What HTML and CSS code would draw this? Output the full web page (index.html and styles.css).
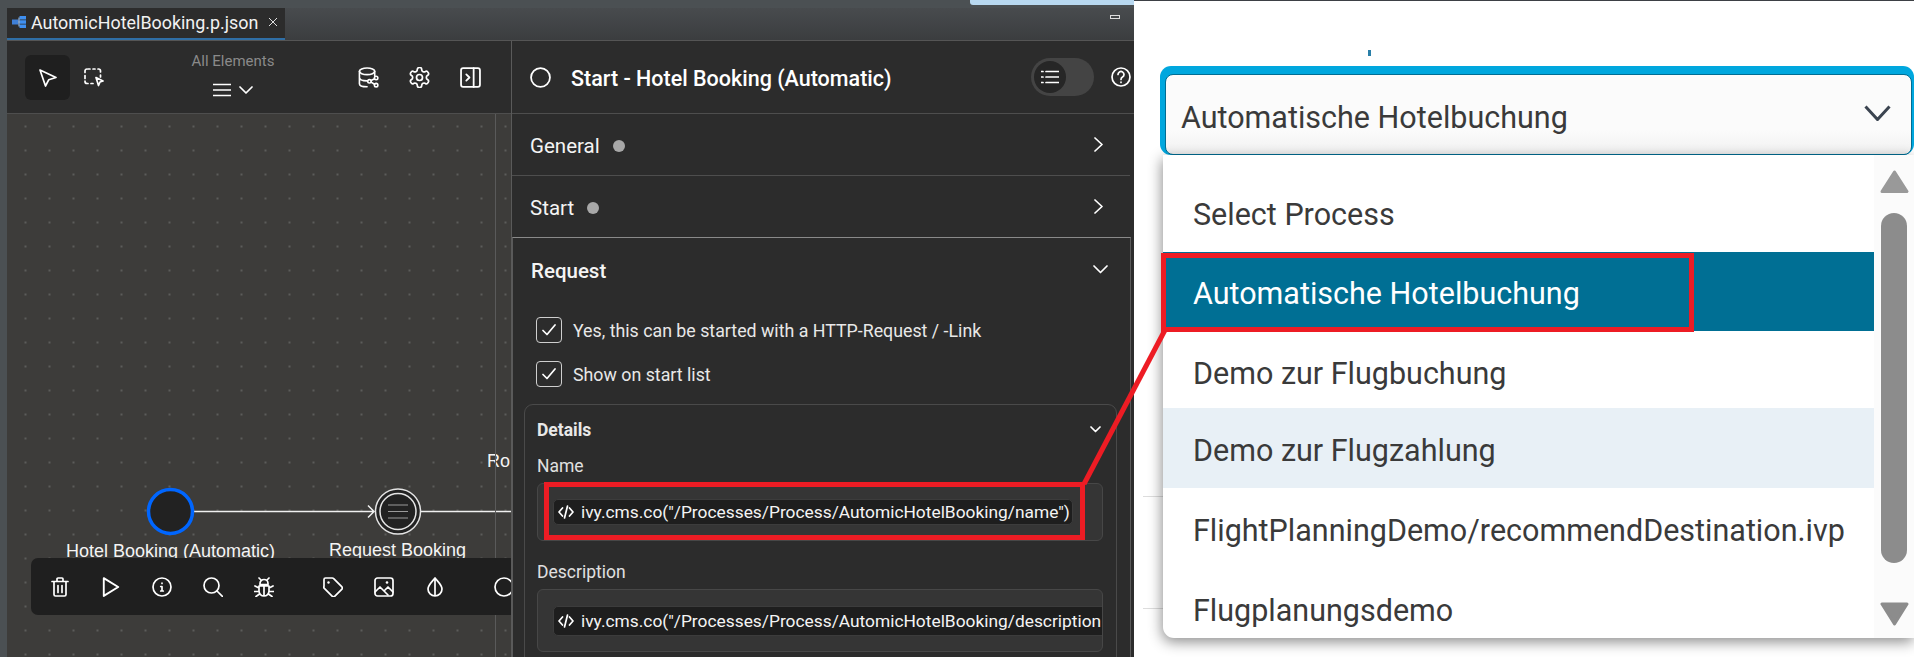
FILE: index.html
```html
<!DOCTYPE html>
<html lang="en">
<head>
  <meta charset="UTF-8">
  <title>Automatic Hotel Booking</title>
  <link rel="stylesheet" href="styles.css">
</head>
<body>
  <div class="page">
    <div class="ide">
      <div class="top-strip"><div class="top-progress"></div></div>
      <div class="tabbar">
        <div class="tab">
          <svg class="tab-icon" viewBox="0 0 14 12"><path d="M0 3.500h6.500v5H0z" fill="#3f7fd6"/><path d="M7.500 0H14v3.500H7.500zM7.500 4.300H14v3.400H7.500zM7.500 8.500H14V12H7.500z" fill="#3f8ff0"/><path d="M6.500 6h1M7 1.500v9" stroke="#a9c8ee" fill="none"/></svg>
          <span class="tab-name">AutomicHotelBooking.p.json</span>
          <svg class="tab-close" viewBox="0 0 10 10"><path d="M1 1l8 8M9 1l-8 8"/></svg>
        </div>
        <div class="tab-min"></div>
      </div>

      <div class="ide-body">
        <!-- process editor -->
        <div class="editor">
          <div class="toolbar">
            <div class="tool-group">
              <div class="tool tool-active">
                <svg class="icon" viewBox="0 0 18 18"><path d="M1 1l16 7.500-7.200 2.200L6.500 17z"/></svg>
              </div>
              <div class="tool">
                <svg class="icon icon-marquee" viewBox="0 0 20 19"><path d="M4 1h2M9 1h2M14 1h.5a2 2 0 0 1 2 2v1M1 4.500V3a2 2 0 0 1 2-2M1 7.500v3M1 13v.5a2 2 0 0 0 2 2h1M7 15.500h2M16.500 7v2"/><path d="M12 9.500l7 3.500-3 1-1.500 3.500z"/></svg>
              </div>
            </div>
            <div class="filter">
              <div class="filter-label">All Elements</div>
              <div class="filter-menu">
                <svg class="icon icon-burger" viewBox="0 0 18 14"><path d="M0 1.500h18M0 7h18M0 12.500h18"/></svg>
                <svg class="icon icon-chev" viewBox="0 0 14 8"><path d="M1 1l6 6 6-6"/></svg>
              </div>
            </div>
            <div class="tool-group tool-group-right">
              <svg class="icon icon-big" viewBox="0 0 22 22"><ellipse cx="9.500" cy="4.500" rx="8" ry="3.500"/><path d="M1.500 4.500v13c0 2 3.500 3.200 8 3.200M1.500 11c0 2 3.500 3.500 8 3.500M17.500 4.500v5"/><circle cx="12" cy="15" r="1.800"/><circle cx="19" cy="11.500" r="1.800"/><circle cx="19" cy="19" r="1.800"/><path d="M13.700 14.200l3.600-1.800M13.700 15.900l3.600 2.200"/></svg>
              <svg class="icon icon-big icon-gear" viewBox="2 1.500 20 21"><path d="M12.220 2h-.44a2 2 0 0 0-2 2v.18a2 2 0 0 1-1 1.730l-.43.250a2 2 0 0 1-2 0l-.15-.08a2 2 0 0 0-2.730.730l-.22.380a2 2 0 0 0 .730 2.730l.15.100a2 2 0 0 1 1 1.720v.510a2 2 0 0 1-1 1.740l-.15.090a2 2 0 0 0-.730 2.730l.22.380a2 2 0 0 0 2.730.730l.15-.08a2 2 0 0 1 2 0l.43.250a2 2 0 0 1 1 1.730V20a2 2 0 0 0 2 2h.44a2 2 0 0 0 2-2v-.18a2 2 0 0 1 1-1.730l.43-.25a2 2 0 0 1 2 0l.15.080a2 2 0 0 0 2.730-.730l.22-.390a2 2 0 0 0-.730-2.730l-.15-.08a2 2 0 0 1-1-1.740v-.5a2 2 0 0 1 1-1.740l.15-.09a2 2 0 0 0 .730-2.730l-.22-.38a2 2 0 0 0-2.730-.730l-.15.080a2 2 0 0 1-2 0l-.43-.25a2 2 0 0 1-1-1.730V4a2 2 0 0 0-2-2z"/><circle cx="12" cy="12" r="3"/></svg>
              <svg class="icon icon-big" viewBox="0 0 20 20"><rect x="1" y="1" width="18" height="18" rx="2"/><path d="M13 1v18M6 7l3 3-3 3"/></svg>
            </div>
          </div>

          <div class="canvas">
            <svg class="flow" viewBox="0 0 504 544">
              <path class="flow-line" d="M186 397.500h180M361 391.500l6 6-6 6M413 397.500h91"/>
              <circle class="node-start" cx="163.500" cy="397.500" r="22"/>
              <circle class="node-outer" cx="391" cy="397.500" r="22.500"/>
              <circle class="node-inner" cx="391" cy="397.500" r="18"/>
              <path class="node-lines" d="M381 391h20M381 397.500h20M381 404h20"/>
            </svg>
            <span class="node-label label-start">Hotel Booking (Automatic)</span>
            <span class="node-label label-request">Request Booking</span>
            <span class="node-label label-route">Ro</span>

            <div class="quick-bar">
              <svg class="icon qb" viewBox="0 0 18 20"><path d="M1 4.500h16M3 4.500v13a1.500 1.500 0 0 0 1.500 1.500h9a1.500 1.500 0 0 0 1.500-1.500v-13M6 4.500V2a1 1 0 0 1 1-1h4a1 1 0 0 1 1 1v2.500M7 8.500v7M11 8.500v7"/></svg>
              <svg class="icon qb" viewBox="0 0 16 18"><path d="M1.500 1l13 8-13 8z"/></svg>
              <svg class="icon qb" viewBox="0 0 20 20"><circle cx="10" cy="10" r="9"/><path d="M10 9.500v4.500M10 6v.5M8.700 9.500H10M8.700 14h2.600"/></svg>
              <svg class="icon qb" viewBox="0 0 20 20"><circle cx="8.500" cy="8.500" r="7.500"/><path d="M14 14l5.500 5.500"/></svg>
              <svg class="icon qb qb-gap" viewBox="0 0 20 20"><path d="M6 6.500a4 4 0 0 1 8 0v1H6zM5 9h10v5a5 5 0 0 1-10 0zM10 9v10M5 11L1 9M15 11l4-2M5 14.500H0.500M15 14.500h4.500M5.500 17L2 19.500M14.500 17l3.500 2.500M7 3L5 1M13 3l2-2"/></svg>
              <svg class="icon qb" viewBox="0 0 20 20"><path d="M1 2.500A1.500 1.500 0 0 1 2.500 1h6.800a2 2 0 0 1 1.400.6l8 8a2 2 0 0 1 0 2.800l-6.800 6.800a2 2 0 0 1-2.800 0l-8-8A2 2 0 0 1 1 9.300z"/><circle class="icon-fill" cx="5.500" cy="5.500" r="1.200"/></svg>
              <svg class="icon qb" viewBox="0 0 20 20"><rect x="1" y="1" width="18" height="18" rx="2.500"/><path d="M1 15l5-5 8 8M11 13l3-3 5 5"/><circle class="icon-fill" cx="13" cy="5.500" r="1.300"/></svg>
              <svg class="icon qb" viewBox="0 0 16 20"><path d="M8 1c3 4 7 7 7 11a7 7 0 0 1-14 0c0-4 4-7 7-11zM8 1v18"/></svg>
              <svg class="icon qb qb-last" viewBox="0 0 20 20"><circle cx="10" cy="10" r="9"/></svg>
            </div>
          </div>
        </div>

        <!-- inscription panel -->
        <div class="panel">
          <div class="panel-head">
            <svg class="icon head-circle" viewBox="0 0 20 20"><circle cx="10" cy="10" r="9"/></svg>
            <span class="panel-title">Start - Hotel Booking (Automatic)</span>
            <div class="toggle">
              <div class="toggle-knob">
                <svg class="icon icon-list" viewBox="0 0 18 14"><path d="M5 1.500h13M5 7h13M5 12.500h13M0 1.500h2M0 7h2M0 12.500h2"/></svg>
              </div>
            </div>
            <svg class="icon icon-help" viewBox="0 0 20 20"><circle cx="10" cy="10" r="9"/><path d="M7 7.500a3 3 0 1 1 4.500 2.600c-1 .6-1.500 1.200-1.500 2.400M10 15v.5"/></svg>
          </div>

          <div class="acc-row">
            <span class="acc-name">General</span><span class="acc-dot"></span>
            <svg class="icon acc-chev" viewBox="0 0 9 15"><path d="M1 1l7 6.500-7 6.500"/></svg>
          </div>
          <div class="acc-row acc-row-last">
            <span class="acc-name">Start</span><span class="acc-dot"></span>
            <svg class="icon acc-chev" viewBox="0 0 9 15"><path d="M1 1l7 6.500-7 6.500"/></svg>
          </div>

          <div class="request">
            <div class="request-head">
              <span class="acc-name acc-name-strong">Request</span>
              <svg class="icon chev-down" viewBox="0 0 15 9"><path d="M1 1l6.500 6.500L14 1"/></svg>
            </div>
            <label class="check-row">
              <span class="check"><svg class="icon" viewBox="0 0 14 12"><path d="M1 6.500l4 4L13 1"/></svg></span>
              Yes, this can be started with a HTTP-Request / -Link
            </label>
            <label class="check-row">
              <span class="check"><svg class="icon" viewBox="0 0 14 12"><path d="M1 6.500l4 4L13 1"/></svg></span>
              Show on start list
            </label>

            <div class="details">
              <div class="details-head">
                <span class="details-title">Details</span>
                <svg class="icon chev-small" viewBox="0 0 11 7"><path d="M1 1l4.500 4.500L10 1"/></svg>
              </div>
              <div class="field-label">Name</div>
              <div class="field">
                <div class="script-input">
                  <svg class="icon icon-code" viewBox="0 0 16 14"><path d="M4.500 3L1 7l3.500 4M11.500 3L15 7l-3.500 4M9.500 1L6.500 13"/></svg>
                  <span class="script-text">ivy.cms.co("/Processes/Process/AutomicHotelBooking/name")</span>
                </div>
              </div>
              <div class="field-label field-label-second">Description</div>
              <div class="field field-tall">
                <div class="script-input script-input-tall">
                  <svg class="icon icon-code" viewBox="0 0 16 14"><path d="M4.500 3L1 7l3.500 4M11.500 3L15 7l-3.500 4M9.500 1L6.500 13"/></svg>
                  <span class="script-text">ivy.cms.co("/Processes/Process/AutomicHotelBooking/description</span>
                </div>
              </div>
            </div>
          </div>
        </div>
      </div>
    </div>

    <!-- translated process start dropdown -->
    <div class="web">
      <div class="tick"></div>
      <div class="select-ring">
        <div class="select">
          <span class="select-value">Automatische Hotelbuchung</span>
          <svg class="select-chev" viewBox="0 0 27 16"><path d="M1.500 1.500l12 13 12-13"/></svg>
        </div>
      </div>
      <div class="bg-line bg-line-one"></div>
      <div class="bg-line bg-line-two"></div>
      <div class="menu">
        <ul class="options">
          <li>Select Process</li>
          <li class="selected">Automatische Hotelbuchung</li>
          <li class="short">Demo zur Flugbuchung</li>
          <li class="hovered">Demo zur Flugzahlung</li>
          <li>FlightPlanningDemo/recommendDestination.ivp</li>
          <li>Flugplanungsdemo</li>
        </ul>
        <div class="scrollbar">
          <svg class="arrow" viewBox="0 0 29 23"><path d="M14.500 2L27 21.500H2z"/></svg>
          <div class="thumb"></div>
          <svg class="arrow arrow-down" viewBox="0 0 29 24"><path d="M2 2h25L14.500 22z"/></svg>
        </div>
      </div>
    </div>

    <!-- red annotation drawn over the screenshot -->
    <svg class="callout" viewBox="0 0 1914 657">
      <rect x="546.500" y="484.500" width="536" height="53"/>
      <rect x="1163.500" y="255.500" width="528" height="74"/>
      <path d="M1084 484L1165 330"/>
    </svg>
  </div>
</body>
</html>
```

FILE: styles.css
```css
* {
  box-sizing: border-box;
}

html, body {
  margin: 0;
  padding: 0;
  height: 100%;
  overflow: hidden;
}

body {
  font-family: Roboto, "Open Sans", Arial, sans-serif;
  background-color: #ffffff;
}

.page {
  position: relative;
  display: flex;
  width: 1914px;
  height: 657px;
}

.icon {
  display: block;
  fill: none;
  stroke: #ffffff;
  stroke-width: 1.7;
  stroke-linecap: round;
  stroke-linejoin: round;
}

.icon-fill {
  fill: #ffffff;
  stroke: none;
}

/* IDE side */
.ide {
  display: flex;
  flex-direction: column;
  width: 1134px;
  flex: none;
  padding-left: 7px;
  background-color: #4b5053;
  overflow: hidden;
}

.top-strip {
  display: flex;
  justify-content: flex-end;
  height: 8px;
  flex: none;
}

.top-progress {
  width: 164px;
  height: 5px;
  background-color: #b8d8f0;
  border-radius: 0 0 0 3px;
}

.tabbar {
  display: flex;
  justify-content: space-between;
  align-items: flex-start;
  height: 33px;
  flex: none;
  background: linear-gradient(#484b4e, #3b3d3f);
  border-bottom: 1px solid #555555;
}

.tab {
  display: flex;
  align-items: center;
  width: 278px;
  height: 32px;
  padding: 0 0 2px 5px;
  background-color: #2c2c2c;
  border-bottom: 2px solid #2f6ea5;
}

.tab-icon {
  width: 14px;
  height: 12px;
  margin-right: 5px;
}

.tab-name {
  font-size: 17.9px;
  color: #f2f2f2;
  white-space: nowrap;
}

.tab-close {
  width: 10px;
  height: 10px;
  margin-left: 10px;
  fill: none;
  stroke: #e0e0e0;
  stroke-width: 1;
}

.tab-min {
  width: 10px;
  height: 4px;
  margin: 7px 14px 0 0;
  border: 1px solid #dddddd;
}

.ide-body {
  display: flex;
  flex: 1;
  min-height: 0;
}

.editor {
  display: flex;
  flex-direction: column;
  width: 504px;
  flex: none;
}

.toolbar {
  position: relative;
  display: flex;
  height: 73px;
  flex: none;
  padding: 14px 29px 0 18px;
  background-color: #2c2c2c;
  border-bottom: 1px solid #4e4e4e;
}

.tool-group {
  display: flex;
  gap: 1px;
}

.tool {
  display: flex;
  justify-content: center;
  align-items: center;
  width: 45px;
  height: 45px;
}

.tool .icon {
  width: 18px;
  height: 18px;
}

.tool .icon-marquee {
  width: 20px;
  height: 19px;
}

.tool-active {
  background-color: #1f1f1f;
  border-radius: 6px;
}

.filter {
  width: 100px;
  margin: -3px 0 0 67px;
  text-align: center;
}

.filter-label {
  font-size: 15px;
  line-height: 18px;
  color: #8a8a8a;
}

.filter-menu {
  display: flex;
  justify-content: center;
  align-items: center;
  gap: 8px;
  margin-top: 13px;
}

.icon-burger {
  width: 18px;
  height: 14px;
}

.icon-chev {
  width: 14px;
  height: 8px;
}

.tool-group-right {
  gap: 30px;
  margin-left: auto;
  align-items: flex-start;
  padding: 12px 1px 0 0;
}

.icon-big {
  width: 21px;
  height: 21px;
}

/* diagram area, free canvas */
.canvas {
  position: relative;
  flex: 1;
  background-color: #3d3c3a;
  background-image: radial-gradient(circle, #5c5c5a 1px, transparent 1.2px);
  background-size: 24px 24px;
  background-position: 6.500px 0.500px;
  overflow: hidden;
}

.canvas::after {
  content: "";
  position: absolute;
  top: 0;
  bottom: 0;
  left: 488px;
  width: 1px;
  background-color: #5a5a5a;
}

.flow {
  position: absolute;
  left: 0;
  top: 0;
  width: 504px;
  height: 544px;
}

.flow-line {
  fill: none;
  stroke: #f0f0f0;
  stroke-width: 1.5;
}

.node-start {
  fill: #222222;
  stroke: #0066ff;
  stroke-width: 3.5;
}

.node-outer {
  fill: #222222;
  stroke: #e4e4e4;
  stroke-width: 1.5;
}

.node-inner {
  fill: #222222;
  stroke: #e4e4e4;
  stroke-width: 1.5;
}

.node-lines {
  stroke: #9a9a9a;
  stroke-width: 1.2;
}

.node-label {
  position: absolute;
  font-family: "Liberation Sans", Arial, sans-serif;
  font-size: 18px;
  line-height: 20px;
  color: #f4f4f4;
  white-space: nowrap;
}

.label-start {
  left: 59px;
  top: 427px;
}

.label-request {
  left: 322px;
  top: 426px;
}

.label-route {
  left: 480px;
  top: 337px;
}

.quick-bar {
  position: absolute;
  left: 24px;
  top: 444px;
  display: flex;
  align-items: center;
  gap: 31px;
  width: 490px;
  height: 57px;
  padding-left: 19px;
  background-color: #1f1f1f;
  border-radius: 7px;
  z-index: 1;
  overflow: hidden;
}

.qb {
  width: 20px;
  height: 20px;
  flex: none;
}

.qb-gap {
  margin-right: 18px;
}

.qb-last {
  margin-left: 18px;
}

/* inscription panel */
.panel {
  flex: 1;
  min-width: 0;
  background-color: #2c2c2c;
  border-left: 1px solid #5a5a5a;
}

.panel-head {
  display: flex;
  align-items: center;
  height: 73px;
  padding: 0 3px 0 18px;
  border-bottom: 1px solid #4e4e4e;
}

.head-circle {
  width: 21px;
  height: 21px;
  margin-right: 20px;
}

.panel-title {
  padding-top: 2px;
  font-size: 21.5px;
  font-weight: 500;
  color: #ffffff;
  white-space: nowrap;
}

.toggle {
  width: 63px;
  height: 38px;
  margin-left: auto;
  padding: 3px;
  background-color: #444444;
  border-radius: 19px;
}

.toggle-knob {
  display: flex;
  justify-content: center;
  align-items: center;
  width: 32px;
  height: 32px;
  background-color: #262626;
  border-radius: 50%;
}

.icon-list {
  width: 18px;
  height: 14px;
}

.icon-help {
  width: 20px;
  height: 20px;
  margin-left: 17px;
}

.acc-row {
  display: flex;
  align-items: center;
  height: 62px;
  width: 618px;
  padding: 3px 27px 0 18px;
  border-bottom: 1px solid #4e4e4e;
}

.acc-row-last {
  height: 61px;
  border-bottom: 0;
}

.acc-name {
  font-size: 20.5px;
  color: #f4f4f4;
}

.acc-name-strong {
  font-weight: 500;
}

.acc-dot {
  width: 12px;
  height: 12px;
  margin-left: 13px;
  background-color: #a8a8a8;
  border-radius: 50%;
}

.acc-chev {
  width: 9px;
  height: 15px;
  margin: -3px 0 0 auto;
}

.request {
  width: 619px;
  height: 420px;
  border: 1px solid #8a8a8a;
  border-bottom: 0;
  border-left-color: #5a5a5a;
  border-right-color: #5a5a5a;
}

.request-head {
  display: flex;
  align-items: center;
  justify-content: space-between;
  height: 64px;
  padding: 2px 22px 0 18px;
}

.chev-down {
  width: 15px;
  height: 9px;
  margin-top: -3px;
}

.check-row {
  display: flex;
  align-items: center;
  height: 26px;
  margin: 15px 0 18px 23px;
  font-size: 17.8px;
  color: #e8e8e8;
}

.check-row + .check-row {
  margin-top: 0;
}

.check {
  display: flex;
  justify-content: center;
  align-items: center;
  width: 26px;
  height: 26px;
  margin-right: 11px;
  border: 1px solid #cfcfcf;
  border-radius: 4px;
}

.check .icon {
  width: 14px;
  height: 12px;
}

.details {
  width: 593px;
  height: 300px;
  margin: -1px 0 0 11px;
  padding: 0 12px;
  border: 1px solid #4a4a4a;
  border-radius: 9px;
}

.details-head {
  display: flex;
  justify-content: space-between;
  align-items: center;
  height: 49px;
  padding-right: 3px;
}

.details-title {
  font-size: 17.5px;
  font-weight: 700;
  color: #e8e8e8;
}

.chev-small {
  width: 11px;
  height: 7px;
}

.field-label {
  font-size: 17.5px;
  line-height: 24px;
  color: #e0e0e0;
}

.field-label-second {
  margin-top: 19px;
}

.field {
  display: flex;
  align-items: center;
  width: 566px;
  height: 58px;
  margin-top: 5px;
  padding-left: 15px;
  background-color: #353535;
  border: 1px solid #474747;
  border-radius: 6px;
  overflow: hidden;
}

.field-tall {
  height: 63px;
}

.script-input {
  display: flex;
  align-items: center;
  width: 520px;
  height: 26px;
  flex: none;
  padding-left: 4px;
  background-color: #1e1e1e;
  border: 1px solid #3c3c3c;
  border-radius: 5px;
}

.script-input-tall {
  width: 560px;
  height: 30px;
  overflow: hidden;
}

.icon-code {
  width: 16px;
  height: 14px;
  flex: none;
  margin-right: 7px;
}

.script-text {
  font-size: 17.35px;
  color: #f4f4f4;
  white-space: nowrap;
}

/* browser side */
.web {
  position: relative;
  flex: 1;
  border-top: 1px solid #3d4045;
  overflow: hidden;
}

.tick {
  width: 3px;
  height: 6px;
  margin: 49px 0 10px 234px;
  background-color: #2a7fa8;
}

.select-ring {
  height: 89px;
  margin-left: 26px;
  padding: 8px 2px 0 5px;
  background-color: #00a7de;
  border-radius: 11px;
}

.select {
  display: flex;
  justify-content: space-between;
  align-items: center;
  height: 81px;
  padding: 0 20px 4px 15px;
  font-size: 30.5px;
  color: #3a3a3a;
  background: linear-gradient(#fbfbfb 70%, #f1f1f1);
  border: 1px solid #006d93;
  border-radius: 8px;
}

.select-value {
  padding-top: 10px;
}

.select-chev {
  width: 27px;
  height: 16px;
  fill: none;
  stroke: #3b4450;
  stroke-width: 3;
}

.bg-line {
  position: absolute;
  left: 9px;
  width: 30px;
  height: 1px;
  background-color: #dddddd;
}

.bg-line-one {
  top: 495px;
}

.bg-line-two {
  top: 607px;
}

.menu {
  position: absolute;
  left: 29px;
  right: 0;
  top: 154px;
  display: flex;
  height: 483px;
  background-color: #ffffff;
  border-radius: 0 0 0 11px;
  box-shadow: -1px 4px 14px rgba(0, 0, 0, 0.45);
  overflow: hidden;
}

.options {
  flex: 1;
  margin: 0;
  padding: 18px 0 0;
  list-style: none;
  font-size: 30.5px;
  color: #3a3a3a;
}

.options li {
  display: flex;
  align-items: center;
  height: 80px;
  padding: 4px 0 0 30px;
  white-space: nowrap;
}

.options li:first-child, .options .selected {
  height: 79px;
}

.options .short {
  height: 77px;
  padding-top: 7px;
}

.options .selected {
  color: #ffffff;
  background-color: #006f94;
}

.options .hovered {
  background-color: #e8f0f6;
}

.scrollbar {
  display: flex;
  flex-direction: column;
  align-items: center;
  width: 40px;
  flex: none;
  padding-top: 15px;
  background-color: #fbfbfb;
}

.arrow {
  width: 29px;
  height: 23px;
  flex: none;
  fill: #999999;
  stroke: #999999;
  stroke-width: 3;
  stroke-linejoin: round;
}

.arrow-down {
  height: 24px;
  margin-top: 39px;
  fill: #8c8c8c;
  stroke: #8c8c8c;
}

.thumb {
  width: 26px;
  height: 350px;
  margin-top: 20px;
  flex: none;
  background-color: #8c8c8c;
  border-radius: 13px;
}

/* annotation */
.callout {
  position: absolute;
  left: 0;
  top: 0;
  width: 1914px;
  height: 657px;
  fill: none;
  stroke: #ed1c24;
  stroke-width: 5;
  z-index: 5;
}
```
